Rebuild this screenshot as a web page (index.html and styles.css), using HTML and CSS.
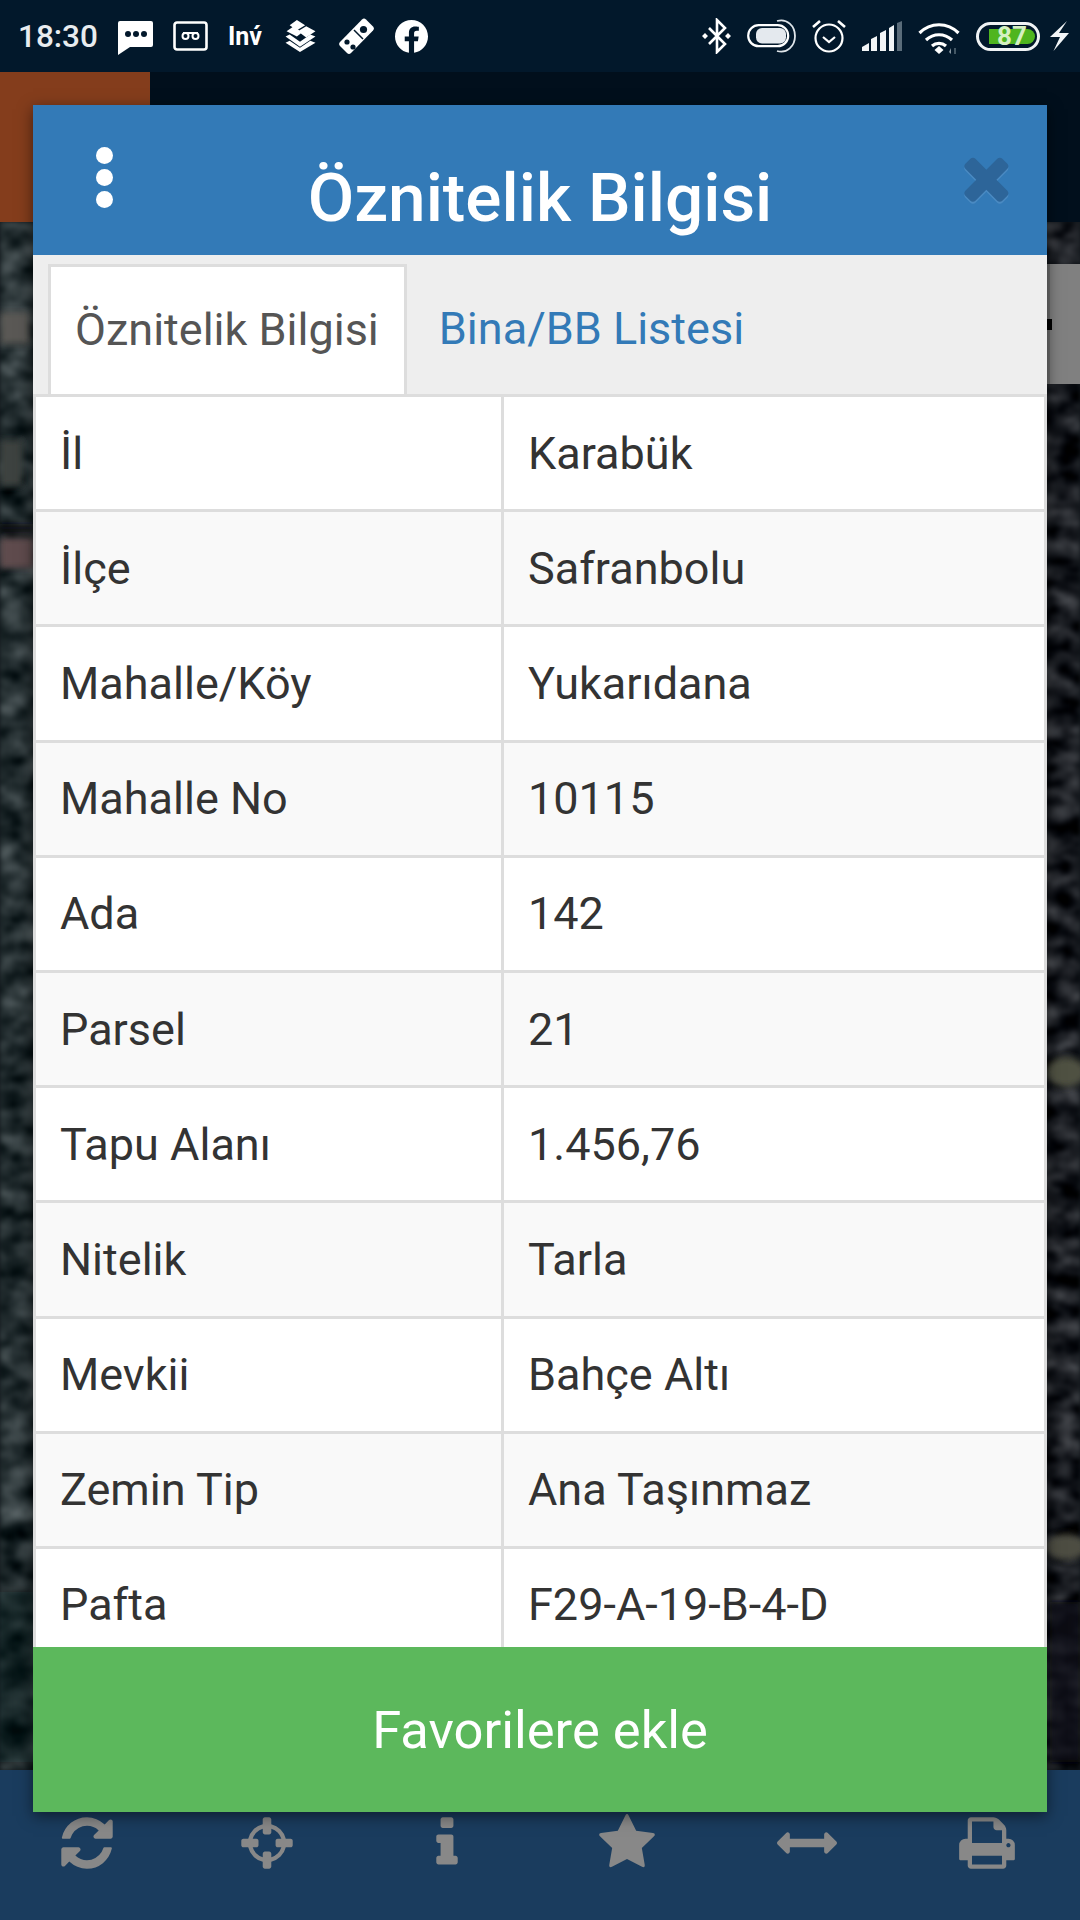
FILE: index.html
```html
<!doctype html>
<html lang = "tr">
    <head>
        <meta charset = "utf-8" />
        <meta name = "viewport" content = "width=device-width, initial-scale=1.0">

        <!-- CSS -->
        <link rel="stylesheet" href="styles.css">

        <title>Öznitelik Bilgisi</title>
    </head>
    <body>
        <div class = "screen">
            <!-- Status bar -->
            <div class = "status">
                <div class = "status-group">
                    <span class = "clock">18:30</span>
                    <svg class = "ic-msg" viewBox = "0 0 35 34"><path d = "M2 0h31a2 2 0 0 1 2 2v22a2 2 0 0 1-2 2H12L0 34V2a2 2 0 0 1 2-2z" fill = "#fff"/><circle cx = "10" cy = "13" r = "3" fill = "#02182b"/><circle cx = "18" cy = "13" r = "3" fill = "#02182b"/><circle cx = "26" cy = "13" r = "3" fill = "#02182b"/></svg>
                    <svg class = "ic-tape" viewBox = "0 0 35 30"><rect x = "1.5" y = "1.5" width = "32" height = "27" rx = "2.5" fill = "none" stroke = "#fff" stroke-width = "2.6"/><circle cx = "12.5" cy = "15" r = "3" fill = "none" stroke = "#fff" stroke-width = "2"/><circle cx = "22.5" cy = "15" r = "3" fill = "none" stroke = "#fff" stroke-width = "2"/><path d = "M10 12h15" stroke = "#fff" stroke-width = "2"/></svg>
                    <span class = "inv">Inv&#769;</span>
                    <svg class = "ic-layers" viewBox = "0 0 31 31"><path d = "M12 0l8 5-8 5-7-5z M21 6l9 5-9 6-8-6z M9 6l8 6-5 4-10-5z" fill = "#fff"/><path d = "M1 16l4-2 10 7 10-7 5 2-15 10z M1 22l4-2 10 7 10-7 5 2-15 9z" fill = "#fff"/></svg>
                    <svg class = "ic-domino" viewBox = "0 0 37 37"><path d = "M24 1.5a3 3 0 0 1 4 0l7 7a3 3 0 0 1 0 4L13 35a3 3 0 0 1-4 0l-7-7a3 3 0 0 1 0-4z" fill = "#fff"/><path d = "M16 12l9 9" stroke = "#02182b" stroke-width = "1.5"/><circle cx = "25.5" cy = "11.5" r = "3.6" fill = "#02182b"/><circle cx = "9" cy = "24" r = "2.6" fill = "#02182b"/><circle cx = "15" cy = "29" r = "2.6" fill = "#02182b"/></svg>
                    <svg class = "ic-fb" viewBox = "8 8 496 496"><path d = "M504 256C504 119 393 8 256 8S8 119 8 256c0 123.78 90.69 226.38 209.25 245V327.69h-63V256h63v-54.64c0-62.15 37-96.48 93.67-96.48 27.14 0 55.52 4.84 55.52 4.84v61h-31.28c-30.8 0-40.41 19.12-40.41 38.73V256h68.78l-11 71.69h-57.78V501C413.31 482.38 504 379.78 504 256z" fill = "#fff"/></svg>
                </div>
                <div class = "status-group status-right">
                    <svg class = "ic-bt" viewBox = "0 0 29 36"><path d = "M7 10l16 16-8 8V2l8 8L7 26" fill = "none" stroke = "#fff" stroke-width = "2.6"/><path d = "M3 15l3 3-3 3-3-3z M26 15l3 3-3 3-3-3z" fill = "#fff"/></svg>
                    <svg class = "ic-toggle" viewBox = "0 0 49 34"><rect x = "1.2" y = "6.2" width = "40" height = "21" rx = "10.5" fill = "none" stroke = "#fff" stroke-width = "2.2"/><rect x = "9" y = "9" width = "30" height = "15.5" rx = "6" fill = "#e4e9ee"/><path d = "M30 2c10-3 18 5 18 15s-8 18-18 15" fill = "none" stroke = "#dfe5ea" stroke-width = "1.8"/></svg>
                    <svg class = "ic-alarm" viewBox = "0 0 34 34"><circle cx = "17" cy = "19" r = "13.5" fill = "none" stroke = "#fff" stroke-width = "2.2"/><path d = "M11 18l6 5 6-5" fill = "none" stroke = "#fff" stroke-width = "2.2"/><path d = "M1 8l7-6 M33 8l-7-6" stroke = "#fff" stroke-width = "2.6"/></svg>
                    <svg class = "ic-signal" viewBox = "0 0 40 30"><path d = "M0 30v-4l7-4v8z M9 30V18l6-3v15z M18 30V12l6-3v21z M27 30V7l5-3v26z" fill = "#f2f5f7"/><path d = "M35 30V2l5-2v30z" fill = "#5a6c7a"/></svg>
                    <svg class = "ic-wifi" viewBox = "0 0 42 34"><path d = "M1.5 12c11-11 28-11 39 0 M8 19c7.5-7 18.5-7 26 0 M14 25c4-3.5 10-3.5 14 0" fill = "none" stroke = "#fff" stroke-width = "3.2"/><path d = "M21 25l4.5 4-4.5 4-4.5-4z" fill = "#fff"/><path d = "M33 27v6l-2-2z" fill = "#8a98a3"/><path d = "M37 27v6" stroke = "#5a6c7a" stroke-width = "1.5"/></svg>
                    <div class = "battery"><span class = "battery-fill">87</span></div>
                    <svg class = "ic-bolt" viewBox = "0 0 19 30"><path d = "M17 0L0 16h10L3.500 30 19 12H9z" fill = "#f2f5f7"/></svg>
                </div>
            </div>

            <!-- App bar behind the dialog -->
            <div class = "appbar"><div class = "logo"></div></div>

            <!-- Map -->
            <div class = "map">
                <svg class = "map-img" viewBox = "0 0 1080 1548" preserveAspectRatio = "none">
                    <defs>
                        <filter id = "grain-left" x = "0" y = "0" width = "100%" height = "100%" color-interpolation-filters = "sRGB">
                            <feTurbulence type = "fractalNoise" baseFrequency = "0.035 0.05" numOctaves = "3" seed = "7"/>
                            <feColorMatrix values = "0.55 0 0 0 -0.13  0.55 0 0 0 -0.09  0.55 0 0 0 -0.08  0 0 0 0 1"/>
                            <feGaussianBlur stdDeviation = "2"/>
                        </filter>
                        <filter id = "grain-right" x = "0" y = "0" width = "100%" height = "100%" color-interpolation-filters = "sRGB">
                            <feTurbulence type = "fractalNoise" baseFrequency = "0.035 0.06" numOctaves = "3" seed = "23"/>
                            <feColorMatrix values = "0.55 0 0 0 -0.18  0.55 0 0 0 -0.17  0.55 0 0 0 -0.15  0 0 0 0 1"/>
                            <feGaussianBlur stdDeviation = "2"/>
                        </filter>
                        <filter id = "soft"><feGaussianBlur stdDeviation = "3"/></filter>
                    </defs>
                    <rect x = "0" y = "0" width = "40" height = "1548" filter = "url(#grain-left)"/>
                    <rect x = "1040" y = "0" width = "40" height = "1548" filter = "url(#grain-right)"/>
                    <g filter = "url(#soft)">
                        <rect x = "0" y = "90" width = "30" height = "32" fill = "#5a5954"/>
                        <rect x = "0" y = "218" width = "22" height = "46" fill = "#3c4241"/>
                        <rect x = "0" y = "302" width = "34" height = "8" fill = "#0d1012"/>
                        <rect x = "0" y = "316" width = "34" height = "30" fill = "#5e4b4e"/>
                        <rect x = "0" y = "1370" width = "34" height = "170" fill = "#0a0f12" opacity = ".45"/>
                        <ellipse cx = "1066" cy = "850" rx = "20" ry = "15" fill = "#4f5143"/>
                        <ellipse cx = "1066" cy = "1325" rx = "20" ry = "13" fill = "#4e4e42"/>
                        <rect x = "1050" y = "1380" width = "30" height = "160" fill = "#0b1018" opacity = ".7"/>
                    </g>
                </svg>
                <div class = "side-tab"><span class = "side-dot"></span></div>
            </div>

            <!-- Bottom toolbar -->
            <div class = "toolbar">
                <svg class = "tool" viewBox = "0 0 1792 1792"><path d = "M1639 1056q0 5-1 7-64 268-268 434.5t-478 166.5q-146 0-282.5-55t-243.5-157l-129 129q-19 19-45 19t-45-19-19-45v-448q0-26 19-45t45-19h448q26 0 45 19t19 45-19 45l-137 137q71 66 161 102t187 36q134 0 250-65t186-179q11-17 53-117 8-23 30-23h192q13 0 22.5 9.5t9.5 22.5zm25-800v448q0 26-19 45t-45 19h-448q-26 0-45-19t-19-45 19-45l138-138q-148-137-349-137-134 0-250 65t-186 179q-11 17-53 117-8 23-30 23h-199q-13 0-22.5-9.5t-9.5-22.5v-7q65-268 270-434.5t480-166.5q146 0 284 55.5t245 156.5l130-129q19-19 45-19t45 19 19 45z"/></svg>
                <svg class = "tool" viewBox = "-128 0 1792 1792"><path d = "M1197 1024h-109q-26 0-45-19t-19-45v-128q0-26 19-45t45-19h109q-32-108-112-188t-188-112v109q0 26-19 45t-45 19h-128q-26 0-45-19t-19-45v-109q-108 32-188 112t-112 188h109q26 0 45 19t19 45v128q0 26-19 45t-45 19h-109q32 108 112 188t188 112v-109q0-26 19-45t45-19h128q26 0 45 19t19 45v109q108-32 188-112t112-188zm339-192v128q0 26-19 45t-45 19h-143q-37 161-154.5 278.5t-278.5 154.5v143q0 26-19 45t-45 19h-128q-26 0-45-19t-19-45v-143q-161-37-278.5-154.5t-154.5-278.5h-143q-26 0-45-19t-19-45v-128q0-26 19-45t45-19h143q37-161 154.5-278.5t278.5-154.5v-143q0-26 19-45t45-19h128q26 0 45 19t19 45v143q161 37 278.5 154.5t154.5 278.5h143q26 0 45 19t19 45z"/></svg>
                <svg class = "tool" viewBox = "0 0 1792 1792"><path d = "M1216 1344v128q0 26-19 45t-45 19h-512q-26 0-45-19t-19-45v-128q0-26 19-45t45-19h64v-384h-64q-26 0-45-19t-19-45v-128q0-26 19-45t45-19h384q26 0 45 19t19 45v576h64q26 0 45 19t19 45zm-128-1152v192q0 26-19 45t-45 19h-256q-26 0-45-19t-19-45v-192q0-26 19-45t45-19h256q26 0 45 19t19 45z"/></svg>
                <svg class = "tool" viewBox = "0 0 1792 1792"><path d = "M1728 647q0 22-26 48l-363 354 86 500q1 7 1 20 0 21-10.5 35.5t-30.5 14.5q-19 0-40-12l-449-236-449 236q-22 12-40 12-21 0-31.5-14.5t-10.5-35.5q0-6 2-20l86-500-364-354q-25-27-25-48 0-37 56-46l502-73 225-455q19-41 49-41t49 41l225 455 502 73q56 9 56 46z"/></svg>
                <svg class = "tool" viewBox = "0 0 1792 1792"><path d = "M1792 896q0 26-19 45l-256 256q-19 19-45 19t-45-19-19-45v-128h-1024v128q0 26-19 45t-45 19-45-19l-256-256q-19-19-19-45t19-45l256-256q19-19 45-19t45 19 19 45v128h1024v-128q0-26 19-45t45-19 45 19l256 256q19 19 19 45z"/></svg>
                <svg class = "tool" viewBox = "0 0 1792 1792"><path d = "M448 1536h896v-256h-896v256zm0-640h896v-384h-160q-40 0-68-28t-28-68v-160h-640v640zm1152 64q0-26-19-45t-45-19-45 19-19 45 19 45 45 19 45-19 19-45zm128 0v416q0 13-9.5 22.5t-22.5 9.5h-224v160q0 40-28 68t-68 28h-960q-40 0-68-28t-28-68v-160h-224q-13 0-22.5-9.5t-9.5-22.5v-416q0-79 56.5-135.5t135.5-56.5h64v-544q0-40 28-68t68-28h672q40 0 88 20t76 48l152 152q28 28 48 76t20 88v256h64q79 0 135.5 56.5t56.5 135.5z"/></svg>
            </div>

            <!-- Dialog -->
            <div class = "dialog">
                <div class = "dialog-head">
                    <div class = "dots"><span></span><span></span><span></span></div>
                    <h4>Öznitelik Bilgisi</h4>
                    <svg class = "close" viewBox = "300 240 1200 1320"><path d = "M1490 1322q0 40-28 68l-136 136q-28 28-68 28t-68-28l-294-294-294 294q-28 28-68 28t-68-28l-136-136q-28-28-28-68t28-68l294-294-294-294q-28-28-28-68t28-68l136-136q28-28 68-28t68 28l294 294 294-294q28-28 68-28t68 28l136 136q28 28 28 68t-28 68l-294 294 294 294q28 28 28 68z"/></svg>
                </div>
                <div class = "tabs">
                    <a class = "tab active">Öznitelik Bilgisi</a>
                    <a class = "tab">Bina/BB Listesi</a>
                </div>
                <div class = "dialog-body">
                    <table>
                        <tr><td>İl</td><td>Karabük</td></tr>
                        <tr><td>İlçe</td><td>Safranbolu</td></tr>
                        <tr><td>Mahalle/Köy</td><td>Yukarıdana</td></tr>
                        <tr><td>Mahalle No</td><td>10115</td></tr>
                        <tr><td>Ada</td><td>142</td></tr>
                        <tr><td>Parsel</td><td>21</td></tr>
                        <tr><td>Tapu Alanı</td><td>1.456,76</td></tr>
                        <tr><td>Nitelik</td><td>Tarla</td></tr>
                        <tr><td>Mevkii</td><td>Bahçe Altı</td></tr>
                        <tr><td>Zemin Tip</td><td>Ana Taşınmaz</td></tr>
                        <tr><td>Pafta</td><td>F29-A-19-B-4-D</td></tr>
                    </table>
                </div>
                <button class = "add">Favorilere ekle</button>
            </div>
        </div>
    </body>
</html>
```

FILE: styles.css
```css
* {
    box-sizing: border-box;
    font-family: "Roboto", "Liberation Sans", sans-serif;
}
body {
    margin: 0px;
    overflow: hidden;
    background-color: #000;
}
svg {
    display: block;
    flex-shrink: 0;
}
.screen {
    position: relative;
    height: 1920px;
    display: flex;
    flex-direction: column;
}

/* Status bar */
.status {
    height: 72px;
    padding: 0px 11px 0px 18px;
    display: flex;
    align-items: center;
    justify-content: space-between;
    background-color: #02182b;
}
.status-group {
    display: flex;
    gap: 20px;
    align-items: center;
}
.status-right {
    gap: 16px;
}
.clock {
    color: #e8ecef;
    font-size: 31.5px;
    font-weight: 500;
}
.inv {
    color: #fff;
    font-size: 25px;
    font-weight: 700;
    width: 36px;
}
.ic-msg { width: 35px; height: 34px; margin-top: 4px; }
.ic-tape { width: 35px; height: 30px; }
.ic-layers { width: 33px; height: 32px; }
.ic-domino { width: 37px; height: 37px; margin-left: 1px; }
.ic-fb { width: 33px; height: 33px; }
.ic-bt { width: 29px; height: 36px; }
.ic-toggle { width: 49px; height: 34px; }
.ic-alarm { width: 34px; height: 34px; }
.ic-signal { width: 40px; height: 30px; }
.ic-wifi { width: 42px; height: 34px; margin-top: 4px; }
.ic-bolt { width: 19px; height: 30px; margin-left: -6px; }
.battery {
    width: 64px;
    height: 29px;
    padding: 4px;
    border: 3px solid #f0f3f5;
    border-radius: 15px;
}
.battery-fill {
    width: 46px;
    height: 15px;
    margin-left: 6px;
    display: flex;
    align-items: center;
    justify-content: center;
    color: #d5f0c2;
    font-size: 26px;
    font-weight: 700;
    background-color: #4fb51f;
    border-radius: 0px 8px 8px 0px;
}

/* App bar and map behind the dialog */
.appbar {
    height: 150px;
    background-color: #010f1c;
}
.logo {
    width: 150px;
    height: 100%;
    background-color: #843d1c;
}
.map {
    position: relative;
    flex: 1;
    background-color: #12181c;
}
.map-img {
    width: 100%;
    height: 100%;
}
.side-tab {
    position: absolute;
    top: 42px;
    right: 0px;
    width: 33px;
    height: 120px;
    display: flex;
    align-items: center;
    background-color: #808080;
    border-left: 3px solid #6c6c6c;
}
.side-dot {
    width: 5px;
    height: 11px;
    margin-left: -3px;
    background-color: #000;
}
.toolbar {
    height: 150px;
    padding-top: 43px;
    display: grid;
    grid-template-columns: repeat(6, 1fr);
    background-color: #1a3c5e;
}
.tool {
    width: 60px;
    height: 60px;
    margin-left: -6px;
    justify-self: center;
    fill: #888;
}

/* Dialog */
.dialog {
    position: absolute;
    top: 105px;
    left: 33px;
    width: 1014px;
    height: 1707px;
    display: flex;
    flex-direction: column;
    box-shadow: 0px 4px 14px rgba(0, 0, 0, 0.5);
}
.dialog-head {
    height: 150px;
    display: grid;
    grid-template-columns: 1fr auto 1fr;
    align-items: center;
    flex-shrink: 0;
    background-color: #337ab7;
}
h4 {
    margin: 0px;
    padding-top: 34px;
    color: #fff;
    font-size: 67.5px;
    font-weight: 500;
}
.dots {
    padding-left: 63px;
    display: flex;
    gap: 5px;
    flex-direction: column;
    align-self: start;
    margin-top: 42px;
}
.dots span {
    width: 17px;
    height: 17px;
    border-radius: 50%;
    background-color: #fff;
}
.close {
    width: 49px;
    height: 49px;
    margin-right: 36px;
    margin-bottom: 6px;
    justify-self: end;
    fill: #2d6599;
    filter: drop-shadow(0px 2px 0px #4a8ac2);
}
.tabs {
    height: 142px;
    padding: 9px 0px 0px 15px;
    display: flex;
    flex-shrink: 0;
    background-color: #eee;
    border-bottom: 3px solid #ddd;
}
.tab {
    padding: 0px 29px 2px;
    height: 130px;
    display: flex;
    align-items: center;
    color: #337ab7;
    font-size: 45px;
}
.active {
    padding: 0px 25px 2px 24px;
    margin-right: 3px;
    color: #555;
    background-color: #fff;
    border: 3px solid #ddd;
    border-bottom: none;
}
.dialog-body {
    flex: 1;
    overflow: hidden;
    background-color: #fff;
}
table {
    width: 100%;
    table-layout: fixed;
    border-spacing: 0px;
    border-left: 3px solid #ddd;
}
td {
    height: 115.2px;
    padding: 0px 22px 0px 24px;
    color: #333;
    font-size: 45px;
    border-bottom: 3px solid #ddd;
    border-right: 3px solid #ddd;
}
td:first-child {
    width: 468px;
}
tr:nth-child(even) td {
    background-color: #f9f9f9;
}
.add {
    height: 165px;
    flex-shrink: 0;
    color: #fff;
    font-size: 52.5px;
    border: none;
    background-color: #5cb85c;
}
```
